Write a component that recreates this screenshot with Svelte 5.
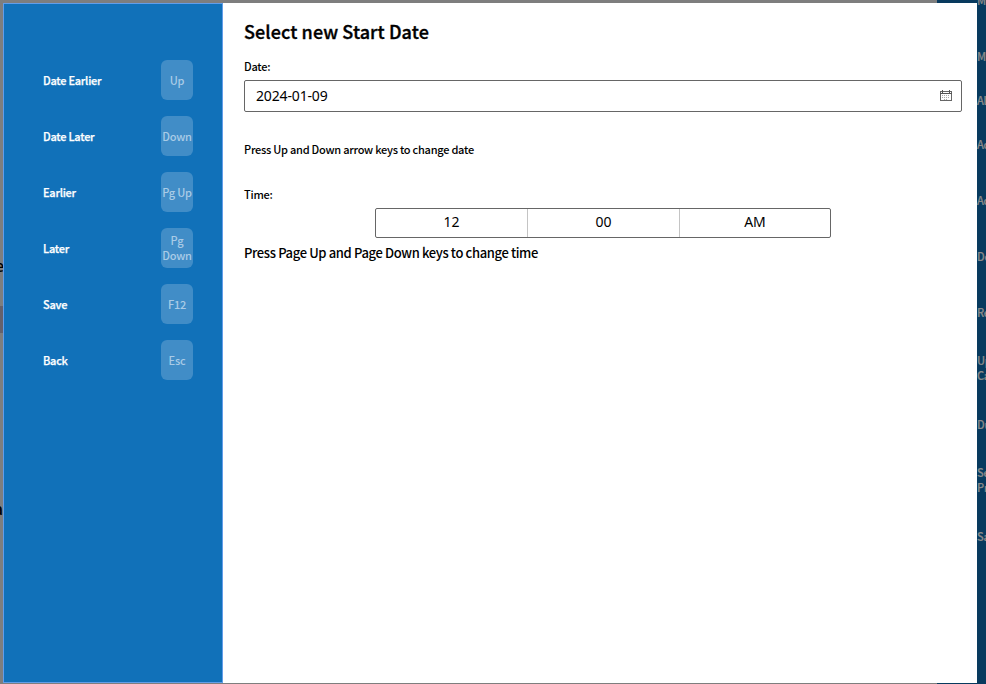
<script>
  const actions = [
    { label: 'Date Earlier', key: 'Up' },
    { label: 'Date Later', key: 'Down' },
    { label: 'Earlier', key: 'Pg Up' },
    { label: 'Later', key: 'Pg Down' },
    { label: 'Save', key: 'F12' },
    { label: 'Back', key: 'Esc' }
  ];
  const time = ['12', '00', 'AM'];
  // Labels of the page menu that show past the dialog's right edge.
  const behind = [
    { text: ['M'], top: -7 },
    { text: ['M'], top: 49 },
    { text: ['Al'], top: 93 },
    { text: ['Ad'], top: 137 },
    { text: ['Ad'], top: 193 },
    { text: ['De'], top: 249 },
    { text: ['Re'], top: 305 },
    { text: ['Up', 'Ca'], top: 353 },
    { text: ['Du'], top: 417 },
    { text: ['Se', 'Pr'], top: 465 },
    { text: ['Sa'], top: 529 }
  ];
</script>

<div class="page">
  <div class="backdrop">
    <span class="band"></span>
    <span class="glyph" style="top: 255px">e</span>
    <span class="glyph low" style="top: 498px">a</span>
    <div class="menu">
      {#each behind as item}
        <div class="item" style="top: {item.top}px">
          {#each item.text as line}<div>{line}</div>{/each}
        </div>
      {/each}
    </div>
  </div>

  <div class="dialog" role="dialog" aria-label="Select new Start Date">
    <nav>
      {#each actions as action}
        <div class="action">
          <span class="label">{action.label}</span>
          <kbd>{action.key}</kbd>
        </div>
      {/each}
    </nav>
    <main>
      <h1>Select new Start Date</h1>
      <div class="caption date">Date:</div>
      <div class="field">
        <span>2024-01-09</span>
        <svg width="12" height="12" viewBox="0 0 12 12" shape-rendering="crispEdges" aria-hidden="true">
          <path d="M.5 1.5h11v9H.5z" fill="none" stroke="#666" />
          <path d="M0 3.5h12M2.5 0v3M9.5 0v3" stroke="#555" />
          <path d="M2 5.5h8M2 7.5h8M4 9h4" stroke="#aaa" stroke-dasharray="1 1" />
        </svg>
      </div>
      <div class="caption hint">Press Up and Down arrow keys to change date</div>
      <div class="caption time">Time:</div>
      <div class="picker">
        {#each time as part}<span>{part}</span>{/each}
      </div>
      <div class="note">Press Page Up and Page Down keys to change time</div>
    </main>
  </div>
</div>

<style>
  :global(body) { overflow: hidden; }
  .page {
    position: relative;
    box-sizing: border-box;
    width: 986px;
    height: 684px;
    padding: 3px 9px 1px 3px;
    overflow: hidden;
    background: #7e7e7e;
    font-family: "Noto Sans CJK JP", "Noto Sans", sans-serif;
    color: #000;
  }
  .backdrop { position: absolute; inset: 0; }
  .band { position: absolute; left: 0; top: 306px; width: 3px; height: 27px; background: #66616b; }
  .glyph { position: absolute; right: 982px; font-size: 16px; line-height: 20px; font-weight: 500; }
  .low { right: 983px; }
  .menu { position: absolute; right: 0; top: 0; width: 49px; height: 684px; background: #083a5e; }
  .item {
    position: absolute;
    left: 40px;
    color: #8a8a8a;
    font-size: 11px;
    line-height: 15px;
    font-weight: 500;
    letter-spacing: -0.25px;
    white-space: nowrap;
    -webkit-text-stroke: 0.2px #8a8a8a;
  }
  .dialog { position: relative; display: flex; height: 680px; background: #fff; }
  nav {
    box-sizing: border-box;
    flex: 0 0 220px;
    display: flex;
    flex-direction: column;
    gap: 16px;
    padding: 56px 29px 0 39px;
    background: #1171b9;
    border: 1px solid #629de9;
  }
  .action { display: flex; align-items: center; justify-content: space-between; height: 40px; }
  .label {
    color: #fff;
    font-size: 11px;
    line-height: 16px;
    font-weight: 500;
    letter-spacing: -0.25px;
    -webkit-text-stroke: 0.25px #fff;
  }
  kbd {
    display: flex;
    align-items: center;
    justify-content: center;
    width: 32px;
    height: 40px;
    border-radius: 6px;
    background: #418dc7;
    color: #a9cbe6;
    font: 500 11px/15px "Noto Sans CJK JP", sans-serif;
    letter-spacing: -0.2px;
    text-align: center;
  }
  main { flex: 1; min-width: 0; padding: 14px 15px 0 21px; }
  h1 {
    margin: 0;
    font-size: 18px;
    line-height: 28px;
    font-weight: 500;
    letter-spacing: 0.09px;
    -webkit-text-stroke: 0.35px #000;
  }
  .caption { font-size: 11px; line-height: 16px; font-weight: 500; letter-spacing: -0.25px; }
  .date { margin-top: 13px; }
  .field {
    box-sizing: border-box;
    display: flex;
    align-items: center;
    justify-content: space-between;
    height: 32px;
    margin-top: 6px;
    padding: 0 9px 0 11px;
    border: 1px solid #666;
    border-radius: 2px;
    font: 14px/20px "Noto Sans", sans-serif;
    letter-spacing: -0.15px;
  }
  .hint { margin-top: 29px; }
  .time { margin-top: 29px; }
  .picker {
    box-sizing: border-box;
    display: flex;
    width: 456px;
    height: 30px;
    margin: 6px auto 0;
    border: 1px solid #666;
    border-radius: 2px;
    font: 14px/26px "Noto Sans", sans-serif;
    text-align: center;
  }
  .picker span { flex: 0 0 151px; }
  .picker span + span { flex-basis: 152px; box-sizing: border-box; border-left: 1px solid #c4c4c4; }
  .picker span:last-child { flex: 1; }
  .note { margin-top: 5px; font-size: 13px; line-height: 20px; font-weight: 500; letter-spacing: -0.37px; }
</style>
